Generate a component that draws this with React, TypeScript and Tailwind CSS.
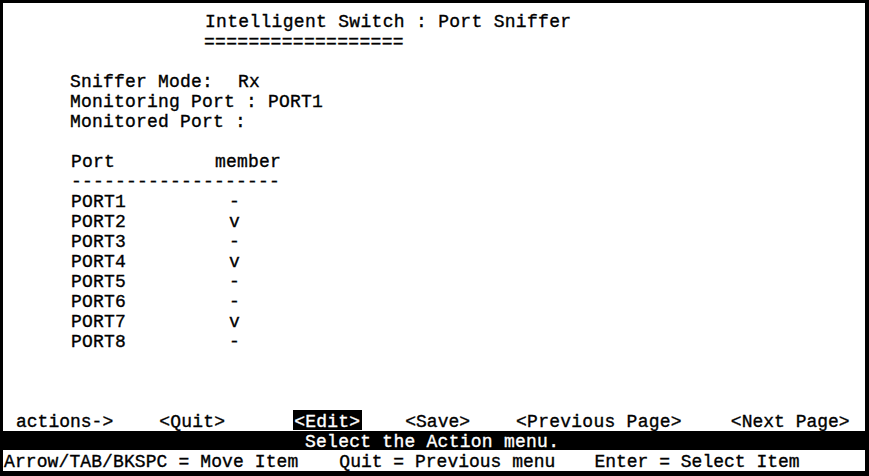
import React from "react";

const ports: [string, string][] = [
  ["PORT1", "-"],
  ["PORT2", "v"],
  ["PORT3", "-"],
  ["PORT4", "v"],
  ["PORT5", "-"],
  ["PORT6", "-"],
  ["PORT7", "v"],
  ["PORT8", "-"],
];

export default function App() {
  return (
    <div className="w-[869px] h-[476px] bg-black pt-[3px] pl-[3px] pr-[4px] pb-[5px]">
      <div className="w-full h-full bg-white flex flex-col pt-[7px] pb-[1px] font-['Liberation_Mono',monospace] text-[18px] leading-[20px] text-black whitespace-pre tracking-[0.2px] [-webkit-text-stroke:0.35px_currentColor]">
        <div className="h-[20px] pt-[2px] pl-[202px] tracking-[0.3px]">Intelligent Switch : Port Sniffer</div>
        <div className="h-[20px] pt-[2px] pl-[201px] tracking-[0.3px]">==================</div>
        <div className="h-[20px]" />
        <div className="h-[20px] pt-[2px] pl-[67px] flex">
          <span>Sniffer Mode:</span>
          <span className="ml-[25px]">Rx</span>
        </div>
        <div className="h-[20px] pt-[2px] pl-[67px]">Monitoring Port : PORT1</div>
        <div className="h-[20px] pt-[2px] pl-[67px]">Monitored Port :</div>
        <div className="h-[20px]" />
        <div className="h-[20px] pt-[2px] pl-[68px] flex">
          <span>Port</span>
          <span className="ml-[100px]">member</span>
        </div>
        <div className="h-[20px] pt-[2px] pl-[68px]">-------------------</div>
        {ports.map(([name, mark]) => (
          <div key={name} className="h-[20px] pt-[2px] pl-[68px] flex">
            <span>{name}</span>
            <span className="ml-[103px]">{mark}</span>
          </div>
        ))}
        <div className="flex-1" />
        <div className="h-[20px] flex tracking-[0px]">
          <span className="ml-[13px] pt-[2px]">actions-&gt;</span>
          <span className="ml-[46px] pt-[2px] tracking-[0.2px]">&lt;Quit&gt;</span>
          <span className="ml-[68px] h-[20px] pt-[2px] pl-[1px] pr-[2px] bg-black text-white tracking-[0.2px]">&lt;Edit&gt;</span>
          <span className="ml-[43px] pt-[2px]">&lt;Save&gt;</span>
          <span className="ml-[46px] pt-[2px] tracking-[0.25px]">&lt;Previous Page&gt;</span>
          <span className="ml-[49px] pt-[2px]">&lt;Next Page&gt;</span>
        </div>
        <div className="mt-[1px] h-[19px] bg-black text-white pl-[302px] pt-[1px] tracking-[0.25px]">Select the Action menu.</div>
        <div className="h-[20px] pt-[2px] pl-[1px] tracking-[0px] flex">
          <span className="tracking-[0.1px]">Arrow/TAB/BKSPC = Move Item</span>
          <span className="ml-[41px]">Quit = Previous menu</span>
          <span className="ml-[39px]">Enter = Select Item</span>
        </div>
      </div>
    </div>
  );
}
